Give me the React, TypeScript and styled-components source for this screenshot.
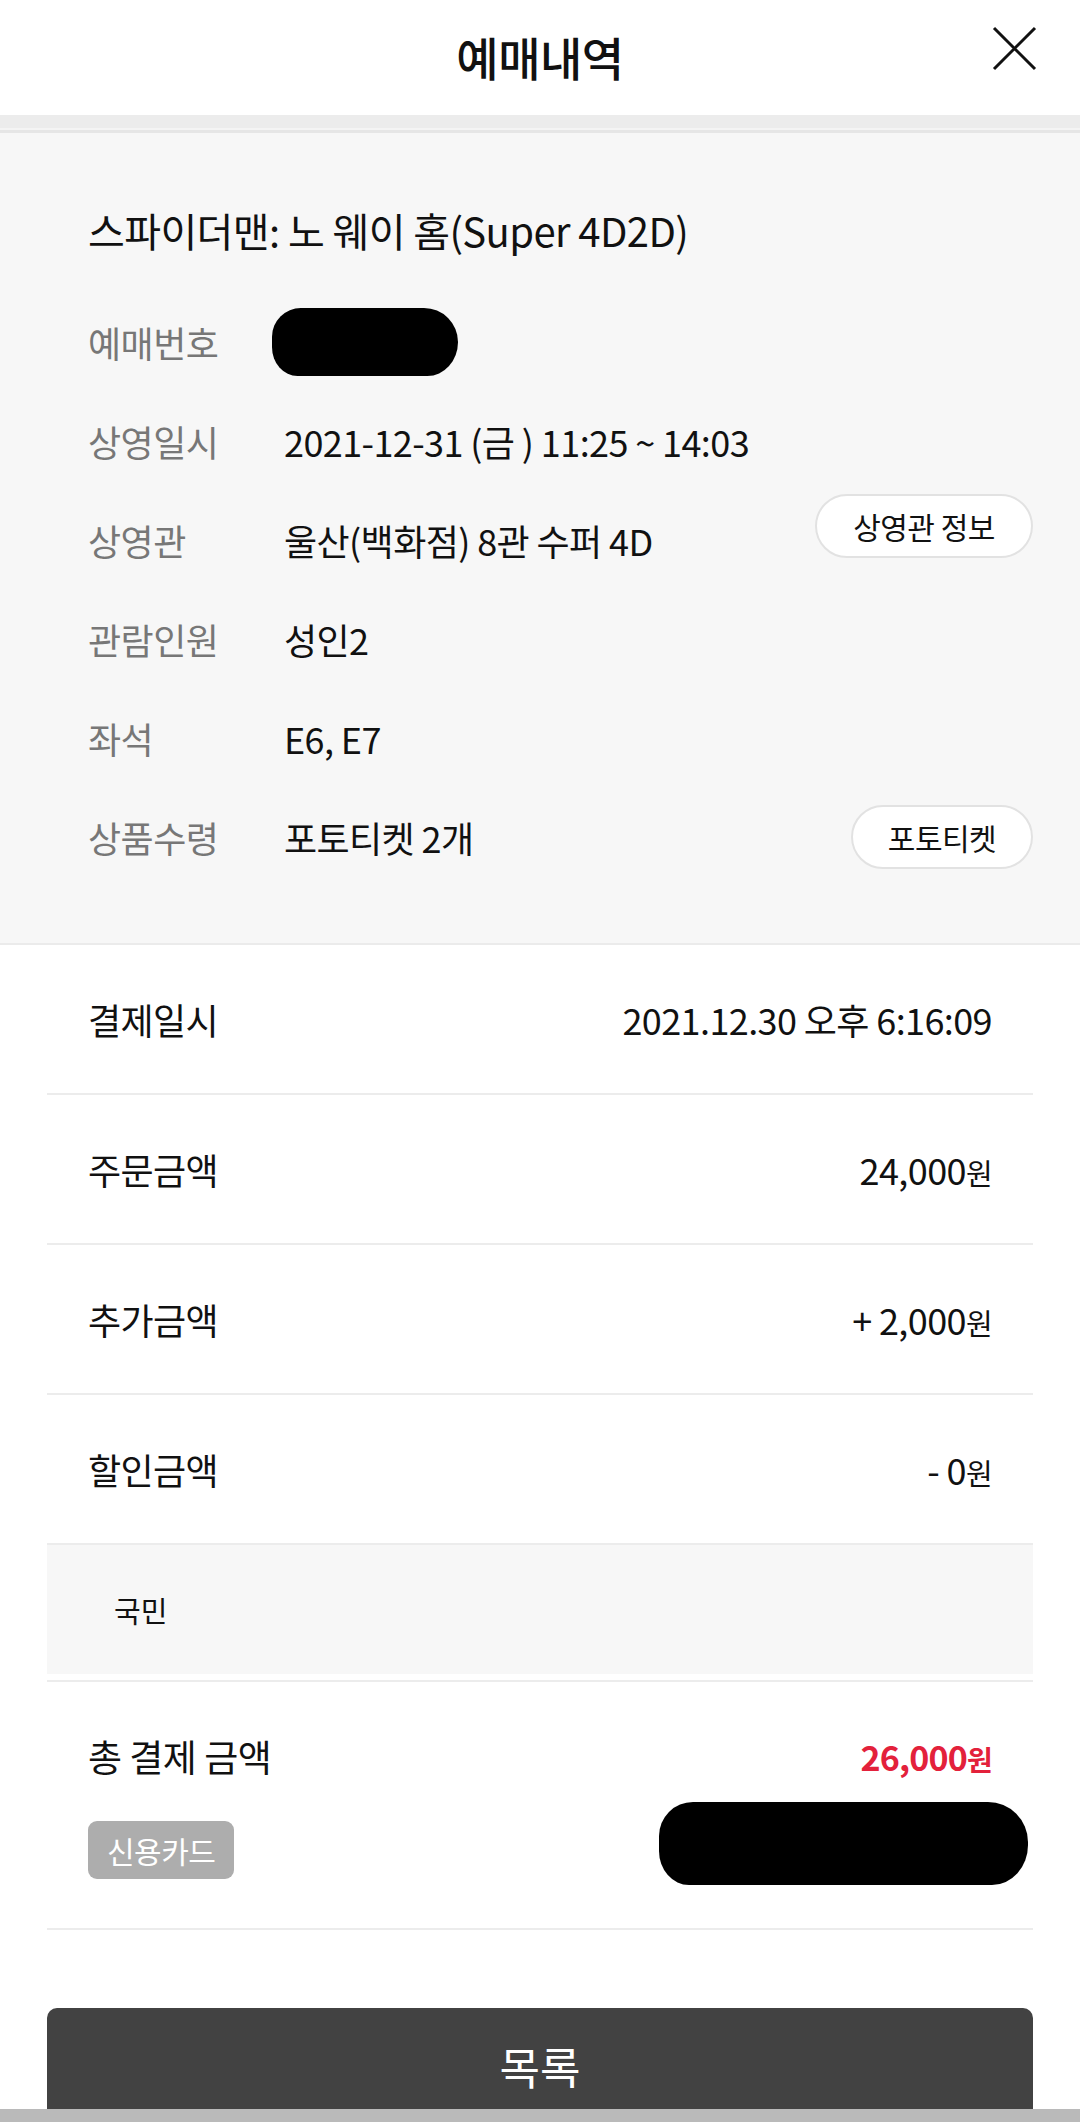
import React from 'react';
import styled, { createGlobalStyle } from 'styled-components';

const GlobalStyle = createGlobalStyle`
  html, body {
    margin: 0;
    padding: 0;
    background: #ffffff;
  }

  body {
    font-family: "Noto Sans CJK KR", "Noto Sans", sans-serif;
    color: #111111;
    -webkit-font-smoothing: antialiased;
  }

  * {
    box-sizing: border-box;
  }
`;

const Page = styled.div`
  width: 1080px;
  min-height: 2122px;
  display: flex;
  flex-direction: column;
  background: #ffffff;
`;

const Header = styled.header`
  height: 115px;
  display: grid;
  grid-template-columns: 1fr auto 1fr;
  align-items: center;
  padding: 0 43px 0 43px;
  background: #ffffff;

  h1 {
    grid-column: 2;
    margin: 0;
    font-size: 46px;
    font-weight: 500;
    letter-spacing: -0.5px;
    line-height: 1;
    padding-bottom: 4px;
  }
`;

const CloseButton = styled.button`
  grid-column: 3;
  justify-self: end;
  width: 45px;
  height: 45px;
  padding: 0;
  border: none;
  background: none;
  cursor: pointer;
  margin-top: -18px;

  svg {
    display: block;
    width: 45px;
    height: 45px;
  }
`;

const HeaderShade = styled.div`
  height: 18px;
  background: #ececec;
  border-bottom: 3px solid #e6e6e6;
  box-shadow: inset 0 -5px 0 -3px #f4f4f4;
`;

const Ticket = styled.section`
  background: #f7f7f7;
  padding: 72px 47px 57px 88px;
  border-bottom: 2px solid #ebebeb;
`;

const MovieTitle = styled.h2`
  margin: 0 0 37px;
  font-size: 40px;
  font-weight: 400;
  line-height: 50px;
  letter-spacing: -0.6px;
  color: #111111;
`;

const InfoRow = styled.div`
  height: 99px;
  display: flex;
  align-items: center;
`;

const InfoLabel = styled.span`
  width: 196px;
  flex-shrink: 0;
  font-size: 36px;
  color: #777777;
  letter-spacing: -0.5px;
`;

const InfoValue = styled.span`
  flex: 1;
  font-size: 36px;
  color: #111111;
  letter-spacing: -0.6px;
  white-space: nowrap;
`;

const PillButton = styled.button<{ $width: number; $lift: number }>`
  width: ${({ $width }) => $width}px;
  height: 64px;
  flex-shrink: 0;
  margin-top: ${({ $lift }) => -$lift * 2}px;
  border: 2px solid #e2e2e2;
  border-radius: 32px;
  background: #ffffff;
  font-family: inherit;
  font-size: 30px;
  color: #111111;
  letter-spacing: -0.5px;
  cursor: pointer;
`;

const Scribble = styled.span<{ $w: number; $h: number }>`
  display: block;
  width: ${({ $w }) => $w}px;
  height: ${({ $h }) => $h}px;
  background: #000000;
  border-radius: 34px 40px 36px 30px / 34px 40px 40px 34px;
`;

const Payment = styled.section`
  padding: 0 47px;
`;

const PayRow = styled.div`
  height: 150px;
  display: flex;
  align-items: center;
  justify-content: space-between;
  padding: 0 41px;
  border-bottom: 2px solid #ececec;
  font-size: 36px;
  letter-spacing: -0.6px;
`;

const Won = styled.span`
  font-size: 29px;
`;

const CardBox = styled.div`
  height: 129px;
  margin-bottom: 6px;
  display: flex;
  align-items: center;
  padding-left: 67px;
  background: #f7f7f7;
  font-size: 29px;
  color: #111111;
`;

const Total = styled.div`
  border-top: 2px solid #ececec;
  border-bottom: 2px solid #ececec;
  padding: 49px 41px 43px;
`;

const TotalHead = styled.div`
  height: 50px;
  display: flex;
  align-items: center;
  justify-content: space-between;
  font-size: 37px;
  letter-spacing: -0.5px;
`;

const TotalAmount = styled.span`
  color: #e3213b;
  font-weight: 700;
  font-size: 34px;
  letter-spacing: -0.8px;

  ${Won} {
    font-size: 28px;
  }
`;

const MethodRow = styled.div`
  margin-top: 21px;
  height: 83px;
  display: flex;
  align-items: center;
  justify-content: space-between;
  margin-right: -36px;
`;

const Badge = styled.span`
  height: 58px;
  margin-top: 12px;
  padding: 0 19px;
  display: inline-flex;
  align-items: center;
  border-radius: 9px;
  background: #adadad;
  color: #ffffff;
  font-size: 30px;
  letter-spacing: -0.5px;
`;

const Footer = styled.div`
  margin-top: 78px;
  padding: 0 47px;
`;

const ListButton = styled.button`
  width: 100%;
  height: 101px;
  border: none;
  border-radius: 10px 10px 0 0;
  background: #424242;
  color: #ffffff;
  font-family: inherit;
  font-size: 44px;
  padding-top: 16px;
  cursor: pointer;
`;

const NavBar = styled.div`
  height: 15px;
  background: #bababa;
`;

const ticketRows = [
  { label: '상영일시', value: '2021-12-31 (금 ) 11:25 ~ 14:03' },
  { label: '상영관', value: '울산(백화점) 8관 수퍼 4D', action: '상영관 정보', width: 218, lift: 14 },
  { label: '관람인원', value: '성인2' },
  { label: '좌석', value: 'E6, E7' },
  { label: '상품수령', value: '포토티켓 2개', action: '포토티켓', width: 182, lift: 0 },
];

const payRows = [
  { label: '결제일시', value: '2021.12.30 오후 6:16:09' },
  { label: '주문금액', value: '24,000', won: true },
  { label: '추가금액', value: '+ 2,000', won: true },
  { label: '할인금액', value: '- 0', won: true },
];

export default function App(): JSX.Element {
  return (
    <Page>
      <GlobalStyle />
      <Header>
        <h1>예매내역</h1>
        <CloseButton aria-label="닫기">
          <svg viewBox="0 0 45 45">
            <path d="M2 2 L43 43 M43 2 L2 43" stroke="#111" strokeWidth="3" fill="none" />
          </svg>
        </CloseButton>
      </Header>
      <HeaderShade />

      <Ticket>
        <MovieTitle>스파이더맨: 노 웨이 홈(Super 4D2D)</MovieTitle>
        <InfoRow>
          <InfoLabel>예매번호</InfoLabel>
          <InfoValue>
            <Scribble $w={186} $h={68} style={{ marginLeft: -12 }} />
          </InfoValue>
        </InfoRow>
        {ticketRows.map((row) => (
          <InfoRow key={row.label}>
            <InfoLabel>{row.label}</InfoLabel>
            <InfoValue>{row.value}</InfoValue>
            {row.action && (
              <PillButton $width={row.width} $lift={row.lift}>
                {row.action}
              </PillButton>
            )}
          </InfoRow>
        ))}
      </Ticket>

      <Payment>
        {payRows.map((row) => (
          <PayRow key={row.label}>
            <span>{row.label}</span>
            <span>
              {row.value}
              {row.won && <Won>원</Won>}
            </span>
          </PayRow>
        ))}
        <CardBox>국민</CardBox>
        <Total>
          <TotalHead>
            <span>총 결제 금액</span>
            <TotalAmount>
              26,000<Won>원</Won>
            </TotalAmount>
          </TotalHead>
          <MethodRow>
            <Badge>신용카드</Badge>
            <Scribble $w={369} $h={83} />
          </MethodRow>
        </Total>
      </Payment>

      <Footer>
        <ListButton>목록</ListButton>
      </Footer>
      <NavBar />
    </Page>
  );
}
